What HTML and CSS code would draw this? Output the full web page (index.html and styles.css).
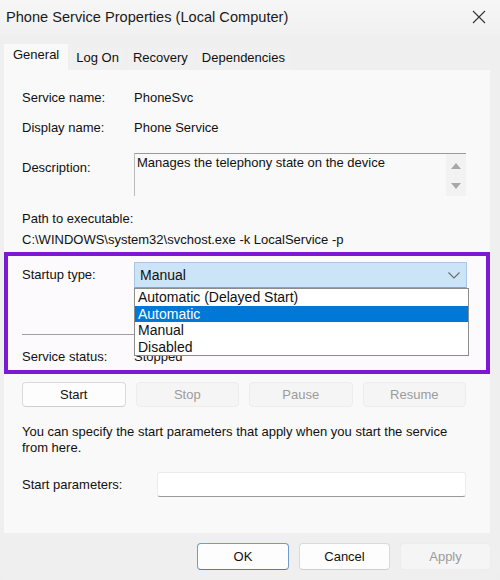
FILE: index.html
```html
<!DOCTYPE html>
<html>
<head>
<meta charset="utf-8">
<link rel="stylesheet" href="styles.css">
</head>
<body>
<div class="window">
  <div class="titlebar">
    <span class="title">Phone Service Properties (Local Computer)</span>
    <svg class="close" width="14" height="14" viewBox="0 0 14 14"><path d="M1 1 L13 13 M13 1 L1 13" stroke="#333" stroke-width="1.1" fill="none"/></svg>
  </div>
  <div class="tabs">
    <div class="tab active">General</div>
    <div class="tab">Log On</div>
    <div class="tab">Recovery</div>
    <div class="tab">Dependencies</div>
  </div>
  <div class="panel">
    <div class="row r1"><span class="label">Service name:</span><span class="value">PhoneSvc</span></div>
    <div class="row r2"><span class="label">Display name:</span><span class="value">Phone Service</span></div>
    <div class="row desc">
      <span class="label desc-label">Description:</span>
      <div class="textbox">
        <span class="desc-text">Manages the telephony state on the device</span>
        <div class="scroll">
          <svg width="10" height="6" viewBox="0 0 10 6"><path d="M5 0 L10 6 L0 6 Z" fill="#a8a8a8"/></svg>
          <svg width="10" height="6" viewBox="0 0 10 6"><path d="M0 0 L10 0 L5 6 Z" fill="#a8a8a8"/></svg>
        </div>
      </div>
    </div>
    <div class="path-label">Path to executable:</div>
    <div class="path">C:\WINDOWS\system32\svchost.exe -k LocalService -p</div>
    <div class="highlight">
      <div class="row startup">
        <span class="label">Startup type:</span>
        <div class="select-wrap">
          <div class="select">
            <span>Manual</span>
            <svg class="chev" width="12" height="7" viewBox="0 0 12 7"><path d="M0.5 0.5 L6 6 L11.5 0.5" stroke="#6a6a6a" stroke-width="1.1" fill="none"/></svg>
          </div>
          <div class="list">
            <div class="opt">Automatic (Delayed Start)</div>
            <div class="opt sel">Automatic</div>
            <div class="opt">Manual</div>
            <div class="opt">Disabled</div>
          </div>
        </div>
      </div>
      <div class="sep"></div>
      <div class="row status"><span class="label">Service status:</span><span class="value">Stopped</span></div>
    </div>
    <div class="buttons">
      <button class="btn">Start</button>
      <button class="btn disabled">Stop</button>
      <button class="btn disabled">Pause</button>
      <button class="btn disabled">Resume</button>
    </div>
    <p class="note">You can specify the start parameters that apply when you start the service from here.</p>
    <div class="row params"><span class="label plabel">Start parameters:</span><div class="input"></div></div>
  </div>
  <div class="footer">
    <button class="fbtn ok">OK</button>
    <button class="fbtn">Cancel</button>
    <button class="fbtn disabled">Apply</button>
  </div>
</div>
</body>
</html>
```
FILE: styles.css
```css
* { box-sizing: border-box; }
html, body { margin: 0; padding: 0; }
body {
  background: #eeeeee;
  font-family: "Liberation Sans", Arial, sans-serif;
  font-size: 13px;
  color: #111;
}
.window {
  width: 500px;
  height: 580px;
  background: #efefef;
  overflow: hidden;
  border-radius: 0 0 8px 8px;
}
.titlebar {
  height: 35px;
  display: flex;
  align-items: center;
  justify-content: space-between;
  padding: 0 14px 2px 6px;
  background: linear-gradient(#f6f6f6, #f1f1f1);
}
.title { font-size: 14.6px; color: #1a1a1a; }
.close { display: block; }
.tabs {
  height: 35px;
  display: flex;
  align-items: flex-end;
  gap: 2px;
  padding-left: 4px;
}
.tab {
  height: 23px;
  line-height: 22px;
  padding: 0 6px;
  background: #f0f0f0;
  color: #111;
}
.tab.active {
  height: 26px;
  line-height: 22px;
  padding: 0 9px;
  background: #f9f9f9;
}
.panel {
  display: flow-root;
  margin: 0 10px 0 4px;
  height: 463px;
  background: #f9f9f9;
  padding: 0 0 0 18px;
}
.row { display: flex; }
.label { width: 112px; flex: none; }
.r1 { margin-top: 18px; line-height: 20px; }
.r2 { margin-top: 10px; line-height: 20px; }
.desc { margin-top: 15px; height: 43px; }
.desc-label { margin-top: 5px; line-height: 20px; }
.textbox {
  width: 332px;
  height: 43px;
  border-top: 1px solid #9a9a9a;
  border-left: 1px solid #bcbcbc;
  display: flex;
  justify-content: space-between;
  background: #f9f9f9;
}
.desc-text { padding: 1px 0 0 2px; line-height: 16px; }
.scroll {
  width: 20px;
  background: #f2f2f2;
  display: flex;
  flex-direction: column;
  align-items: center;
  gap: 14px;
  padding-top: 9px;
}
.scroll svg { display: block; }
.path-label { margin-top: 13px; line-height: 20px; }
.path { margin-top: 1px; line-height: 20px; }
.highlight {
  margin: 2px 0 0 -18px;
  border: 4px solid #7b19d3;
  height: 122px;
  padding: 6px 0 0 14px;
  background: #fcfafc;
}
.startup { height: 26px; line-height: 26px; }
.select-wrap { position: relative; width: 333px; }
.select {
  height: 26px;
  background: #cce4f7;
  border: 1px solid #a9c7e2;
  border-bottom-color: #7ea8cf;
  display: flex;
  align-items: center;
  justify-content: space-between;
  padding: 0 6px 0 5px;
  font-size: 14px;
  line-height: 24px;
}
.chev { display: block; }
.list {
  position: absolute;
  top: 26px;
  left: 0;
  width: 335px;
  background: #fff;
  border: 1px solid #8c8c8c;
  z-index: 2;
  font-size: 14px;
}
.opt { height: 16.5px; line-height: 16px; padding-left: 3px; }
.opt.sel { background: #0078d7; color: #fff; }
.sep {
  margin-top: 46px;
  width: 444px;
  height: 1px;
  background: #a0a0a0;
}
.status { margin-top: 12px; line-height: 20px; }
.buttons {
  margin-top: 8px;
  width: 444px;
  display: grid;
  grid-template-columns: repeat(4, 1fr);
  gap: 10px;
}
.btn, .fbtn {
  font-family: "Liberation Sans", Arial, sans-serif;
  font-size: 13px;
  height: 25px;
  background: #fdfdfd;
  border: 1px solid #dadada;
  border-bottom-color: #cfcfcf;
  border-radius: 4px;
  color: #111;
  padding: 0;
}
.btn.disabled, .fbtn.disabled {
  background: #f5f5f5;
  border-color: #ededed;
  color: #9b9b9b;
}
.note {
  margin: 17px 0 0 0;
  line-height: 16px;
  width: 440px;
}
.params { margin-top: 16px; height: 25px; align-items: center; }
.plabel { width: 135px; }
.input {
  width: 309px;
  height: 25px;
  background: #fff;
  border: 1px solid #ececec;
  border-bottom-color: #9a9a9a;
  border-radius: 3px;
}
.footer {
  margin-top: 10px;
  display: flex;
  justify-content: flex-end;
  gap: 10px;
  padding-right: 9px;
}
.fbtn { width: 91px; height: 27px; }
.fbtn.ok { width: 92px; border-color: #6f9ccc; border-bottom-color: #4b7fb8; }
```
